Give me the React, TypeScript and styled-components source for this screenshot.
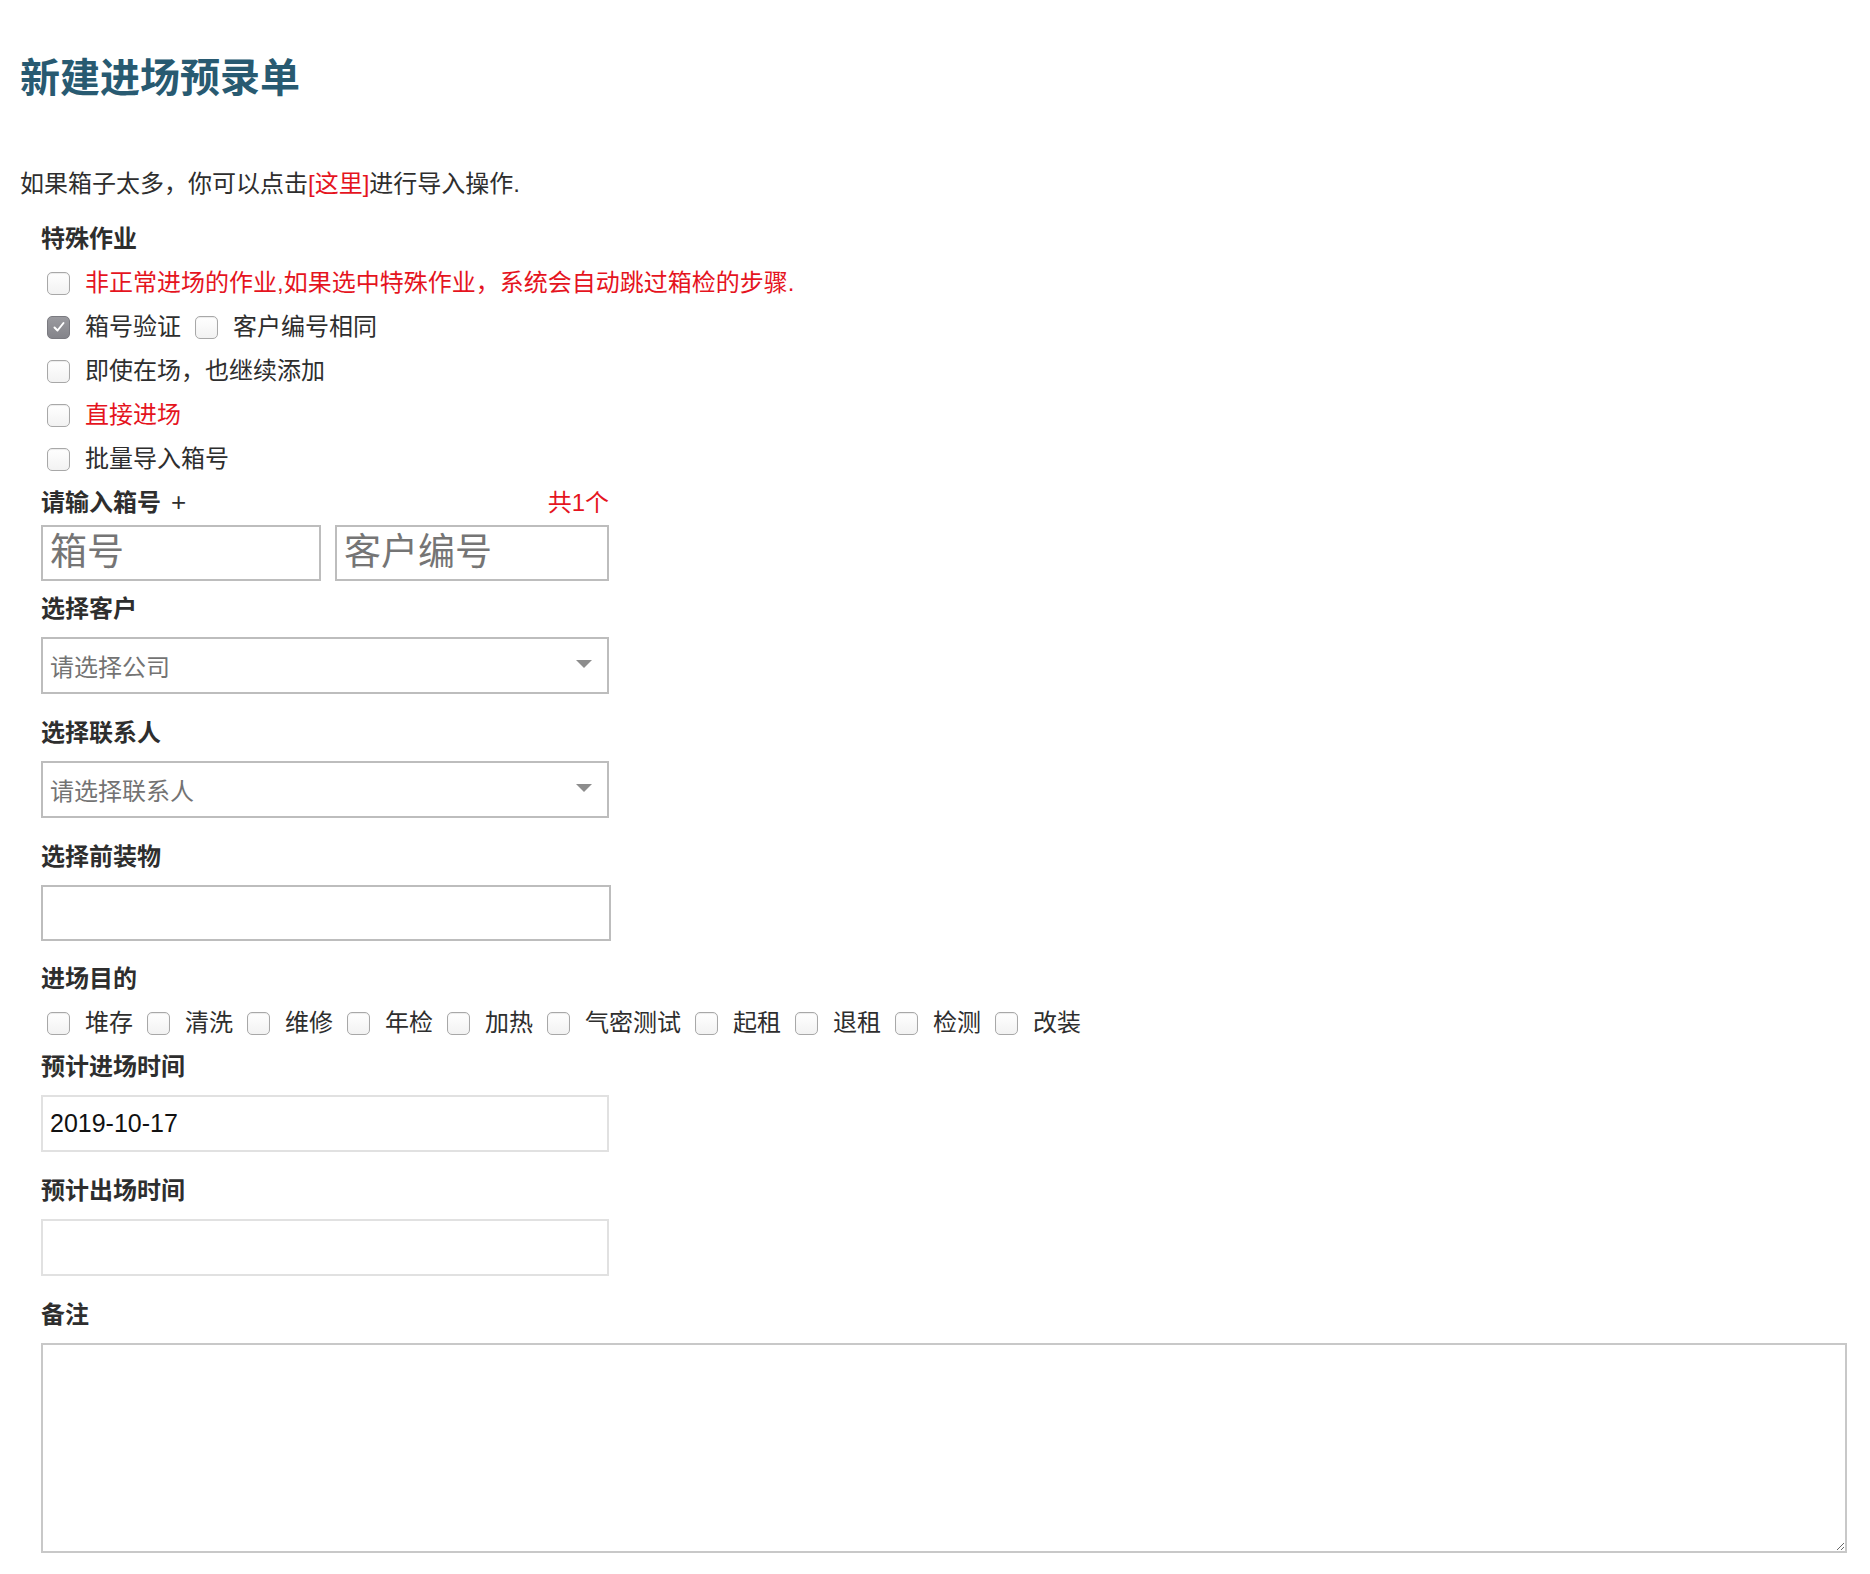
import React from "react";
import styled, { createGlobalStyle } from "styled-components";

const GlobalStyle = createGlobalStyle`
  html, body { margin: 0; padding: 0; background: #fff; }
  body {
    font-family: "Liberation Sans", "Noto Sans CJK SC", sans-serif;
    color: #2e2e2e;
  }
  * { box-sizing: border-box; }
`;

const Page = styled.div`
  padding: 56px 20px 40px 20px;
`;

const Title = styled.h1`
  margin: 0;
  font-size: 40px;
  line-height: 44px;
  font-weight: 700;
  color: #285a71;
`;

const Intro = styled.p`
  margin: 67px 0 0;
  font-size: 24px;
  line-height: 34px;
  color: #2e2e2e;
`;

const Red = styled.span`
  color: #e5141e;
`;

const Form = styled.div`
  margin-top: 16px;
  padding-left: 21px;
`;

const Group = styled.div<{ $top?: number }>`
  margin-top: ${(p) => p.$top ?? 0}px;
`;

const Label = styled.div<{ $width?: number }>`
  display: flex;
  justify-content: space-between;
  align-items: center;
  width: ${(p) => (p.$width ? `${p.$width}px` : "auto")};
  height: 44px;
  font-size: 24px;
  line-height: 44px;
  font-weight: 700;
  color: #2e2e2e;
`;

const Plus = styled.span`
  font-weight: 400;
  font-size: 26px;
  line-height: 1;
  margin-left: 10px;
`;

const Count = styled.span`
  font-weight: 400;
  color: #e5141e;
`;

const CheckRow = styled.div`
  display: flex;
  align-items: center;
  height: 44px;
`;

const Option = styled.label`
  display: inline-flex;
  align-items: center;
  margin-right: 8px;
  font-size: 24px;
  line-height: 34px;
`;

const OptionText = styled.span<{ $red?: boolean }>`
  color: ${(p) => (p.$red ? "#e5141e" : "#2e2e2e")};
`;

const Box = styled.span<{ $checked?: boolean }>`
  display: inline-flex;
  align-items: center;
  justify-content: center;
  width: 23px;
  height: 23px;
  margin: 0 15px 0 6px;
  border-radius: 5px;
  border: 1px solid ${(p) => (p.$checked ? "#7a7a80" : "#a8a8a8")};
  background: ${(p) =>
    p.$checked
      ? "linear-gradient(#9a9a9f, #84848a)"
      : "linear-gradient(#ffffff, #f2f2f2)"};
  box-shadow: ${(p) =>
    p.$checked ? "none" : "inset 0 1px 1px rgba(0,0,0,0.08)"};
  flex-shrink: 0;
`;

const Inputs = styled.div`
  display: flex;
  gap: 14px;
  width: 568px;
`;

const TextInput = styled.input<{ $big?: boolean; $width?: number; $light?: boolean }>`
  display: block;
  width: ${(p) => (p.$width ? `${p.$width}px` : "568px")};
  height: ${(p) => (p.$big ? 56 : 57)}px;
  margin: 0;
  padding: 0 7px;
  border: 2px solid ${(p) => (p.$light ? "#e1e1e1" : "#bdbdbd")};
  border-radius: 0;
  outline: none;
  background: #fff;
  font-family: "Liberation Sans", "Noto Sans CJK SC", sans-serif;
  font-size: ${(p) => (p.$big ? 37 : 25)}px;
  color: #111;
  &::placeholder {
    color: #757575;
  }
`;

const SelectBox = styled.div`
  display: flex;
  align-items: center;
  justify-content: space-between;
  width: 568px;
  height: 57px;
  padding: 0 15px 0 7px;
  border: 2px solid #bdbdbd;
  background: #fff;
  font-size: 24px;
  color: #737373;
`;

const Caret = styled.span`
  width: 0;
  height: 0;
  border-left: 8px solid transparent;
  border-right: 8px solid transparent;
  border-top: 8px solid #8d8d8d;
  margin-top: -4px;
`;

const Spacer = styled.div`
  height: 6px;
`;

const Notes = styled.textarea`
  display: block;
  width: 1806px;
  height: 210px;
  margin: 0;
  padding: 6px;
  border: 2px solid #c8c8c8;
  border-radius: 0;
  outline: none;
  font-family: "Liberation Sans", "Noto Sans CJK SC", sans-serif;
  font-size: 24px;
`;

const Check = ({ checked }: { checked?: boolean }) => (
  <Box $checked={checked}>
    {checked && (
      <svg width="14" height="14" viewBox="0 0 14 14">
        <path
          d="M2.5 7.5 L5.5 10.5 L11.5 3"
          fill="none"
          stroke="#fff"
          strokeWidth="2"
          strokeLinecap="round"
          strokeLinejoin="round"
        />
      </svg>
    )}
  </Box>
);

const Opt = ({
  text,
  checked,
  red,
}: {
  text: string;
  checked?: boolean;
  red?: boolean;
}) => (
  <Option>
    <Check checked={checked} />
    <OptionText $red={red}>{text}</OptionText>
  </Option>
);

const purposes = ["堆存", "清洗", "维修", "年检", "加热", "气密测试", "起租", "退租", "检测", "改装"];

export default function App() {
  return (
    <>
      <GlobalStyle />
      <Page>
        <Title>新建进场预录单</Title>
        <Intro>
          如果箱子太多，你可以点击<Red>[这里]</Red>进行导入操作.
        </Intro>
        <Form>
          <Label>特殊作业</Label>
          <CheckRow>
            <Opt text="非正常进场的作业,如果选中特殊作业，系统会自动跳过箱检的步骤." red />
          </CheckRow>
          <CheckRow>
            <Opt text="箱号验证" checked />
            <Opt text="客户编号相同" />
          </CheckRow>
          <CheckRow>
            <Opt text="即使在场，也继续添加" />
          </CheckRow>
          <CheckRow>
            <Opt text="直接进场" red />
          </CheckRow>
          <CheckRow>
            <Opt text="批量导入箱号" />
          </CheckRow>

          <Label $width={568}>
            <span>
              请输入箱号<Plus>+</Plus>
            </span>
            <Count>共1个</Count>
          </Label>
          <Inputs>
            <TextInput $big $width={280} placeholder="箱号" />
            <TextInput $big $width={274} placeholder="客户编号" />
          </Inputs>

          <Group $top={6}>
            <Label>选择客户</Label>
            <Spacer />
            <SelectBox>
              <span>请选择公司</span>
              <Caret />
            </SelectBox>
          </Group>

          <Group $top={17}>
            <Label>选择联系人</Label>
            <Spacer />
            <SelectBox>
              <span>请选择联系人</span>
              <Caret />
            </SelectBox>
          </Group>

          <Group $top={17}>
            <Label>选择前装物</Label>
            <Spacer />
            <TextInput $big $width={570} />
          </Group>

          <Group $top={16}>
            <Label>进场目的</Label>
            <CheckRow>
              {purposes.map((p) => (
                <Opt key={p} text={p} />
              ))}
            </CheckRow>
          </Group>

          <Group>
            <Label>预计进场时间</Label>
            <Spacer />
            <TextInput $light defaultValue="2019-10-17" />
          </Group>

          <Group $top={17}>
            <Label>预计出场时间</Label>
            <Spacer />
            <TextInput $light />
          </Group>

          <Group $top={17}>
            <Label>备注</Label>
            <Spacer />
            <Notes />
          </Group>
        </Form>
      </Page>
    </>
  );
}
